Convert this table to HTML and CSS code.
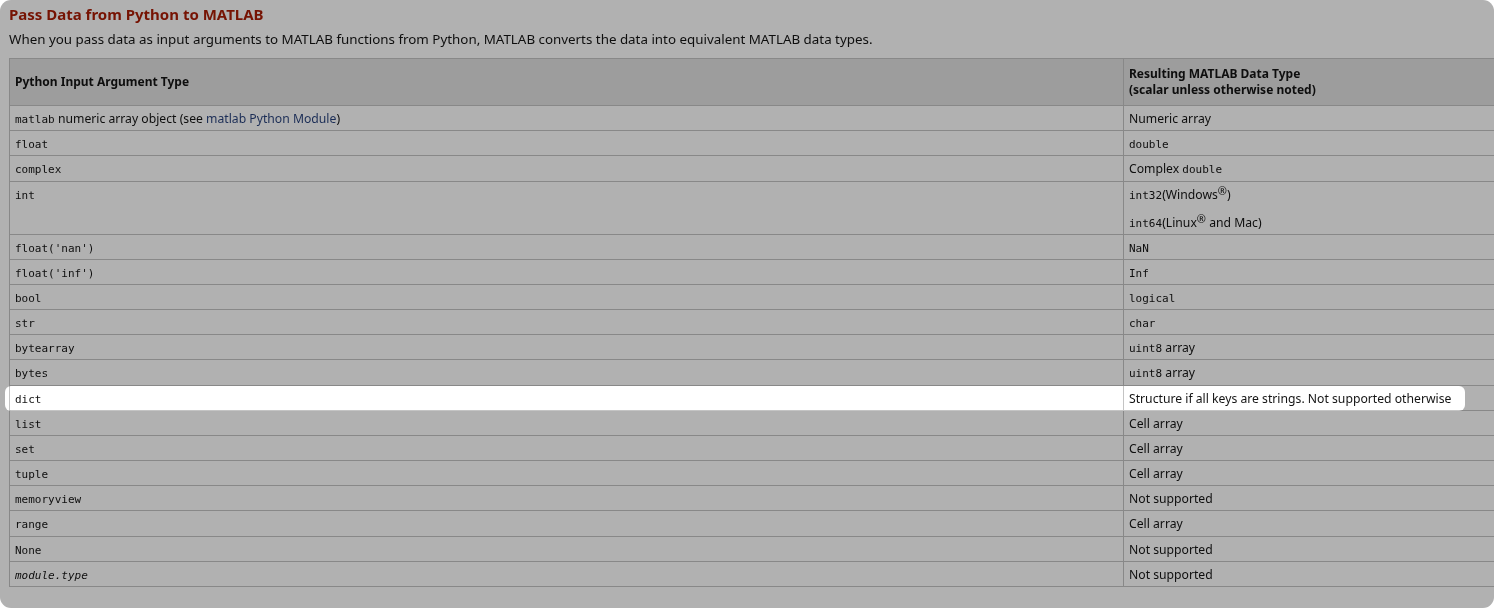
FILE: index.html
```html
<!DOCTYPE html>
<html>
<head>
<meta charset="utf-8">
<link rel="stylesheet" href="styles.css">
</head>
<body>
<div class="page">
  <h2 class="title">Pass Data from Python to MATLAB</h2>
  <p class="desc">When you pass data as input arguments to MATLAB functions from Python, MATLAB converts the data into equivalent MATLAB data types.</p>
  <div class="tablewrap">
    <table class="types">
      <thead>
        <tr>
          <th class="c1">Python Input Argument Type</th>
          <th>Resulting MATLAB Data Type<br>(scalar unless otherwise noted)</th>
        </tr>
      </thead>
      <tbody>
        <tr><td><code>matlab</code> numeric array object (see <span class="link">matlab Python Module</span>)</td><td>Numeric array</td></tr>
        <tr><td><code>float</code></td><td><code>double</code></td></tr>
        <tr><td><code>complex</code></td><td>Complex <code>double</code></td></tr>
        <tr><td><code>int</code></td><td><p class="para"><code>int32</code>(Windows<sup>®</sup>)</p><p class="para"><code>int64</code>(Linux<sup>®</sup> and Mac)</p></td></tr>
        <tr><td><code>float('nan')</code></td><td><code>NaN</code></td></tr>
        <tr><td><code>float('inf')</code></td><td><code>Inf</code></td></tr>
        <tr><td><code>bool</code></td><td><code>logical</code></td></tr>
        <tr><td><code>str</code></td><td><code>char</code></td></tr>
        <tr><td><code>bytearray</code></td><td><code>uint8</code> array</td></tr>
        <tr><td><code>bytes</code></td><td><code>uint8</code> array</td></tr>
        <tr><td><code>dict</code></td><td>Structure if all keys are strings. Not supported otherwise</td></tr>
        <tr><td><code>list</code></td><td>Cell array</td></tr>
        <tr><td><code>set</code></td><td>Cell array</td></tr>
        <tr><td><code>tuple</code></td><td>Cell array</td></tr>
        <tr><td><code>memoryview</code></td><td>Not supported</td></tr>
        <tr><td><code>range</code></td><td>Cell array</td></tr>
        <tr><td><code>None</code></td><td>Not supported</td></tr>
        <tr><td><code class="it">module.type</code></td><td>Not supported</td></tr>
      </tbody>
    </table>
    <div class="spotlight"></div>
  </div>
</div>
</body>
</html>
```

FILE: styles.css
```css
html, body {
  margin: 0;
  padding: 0;
  background: #ffffff;
}
body {
  width: 1494px;
  height: 608px;
  overflow: hidden;
}
.page {
  height: 608px;
  box-sizing: border-box;
  background: #b1b1b1;
  border-radius: 11px;
  overflow: hidden;
  padding: 4px 0 0 9px;
  font-family: "Noto Sans", "Open Sans", sans-serif;
  color: #0e0e0e;
}
.title {
  margin: 0;
  font-family: "Noto Sans", "Open Sans", sans-serif;
  font-size: 15px;
  font-weight: bold;
  line-height: 20px;
  color: #761303;
}
.desc {
  margin: 5px 0 0;
  font-size: 13.37px;
  line-height: 20px;
}
.tablewrap {
  position: relative;
  margin-top: 9px;
}
.types {
  border-collapse: collapse;
  width: 1530px;
  font-size: 12.2px;
  line-height: 17px;
}
.types th, .types td {
  border: 1px solid #888888;
  text-align: left;
  vertical-align: top;
  padding: 4px 5px 3px 5px;
}
.types td {
  height: 17.18px;
}
.types th {
  background: #9d9d9d;
  font-weight: bold;
  vertical-align: middle;
  padding-top: 7px;
  padding-bottom: 7px;
  line-height: 16px;
  font-size: 12px;
}
.types .c1 {
  width: 1103px;
}
code {
  font-family: "DejaVu Sans Mono", "Liberation Mono", monospace;
  font-size: 11px;
  line-height: 1;
}
.it {
  font-style: italic;
}
.link {
  color: #1b2d56;
}
.para {
  margin: 0 0 11px;
}
.para:last-child {
  margin-bottom: 0;
}
sup {
  font-size: 11px;
  line-height: 0;
  vertical-align: 4px;
}
.spotlight {
  position: absolute;
  left: -4px;
  top: 328px;
  width: 1460px;
  height: 25px;
  border-radius: 6px;
  background: #4e4e4e;
  mix-blend-mode: color-dodge;
  pointer-events: none;
}
```
